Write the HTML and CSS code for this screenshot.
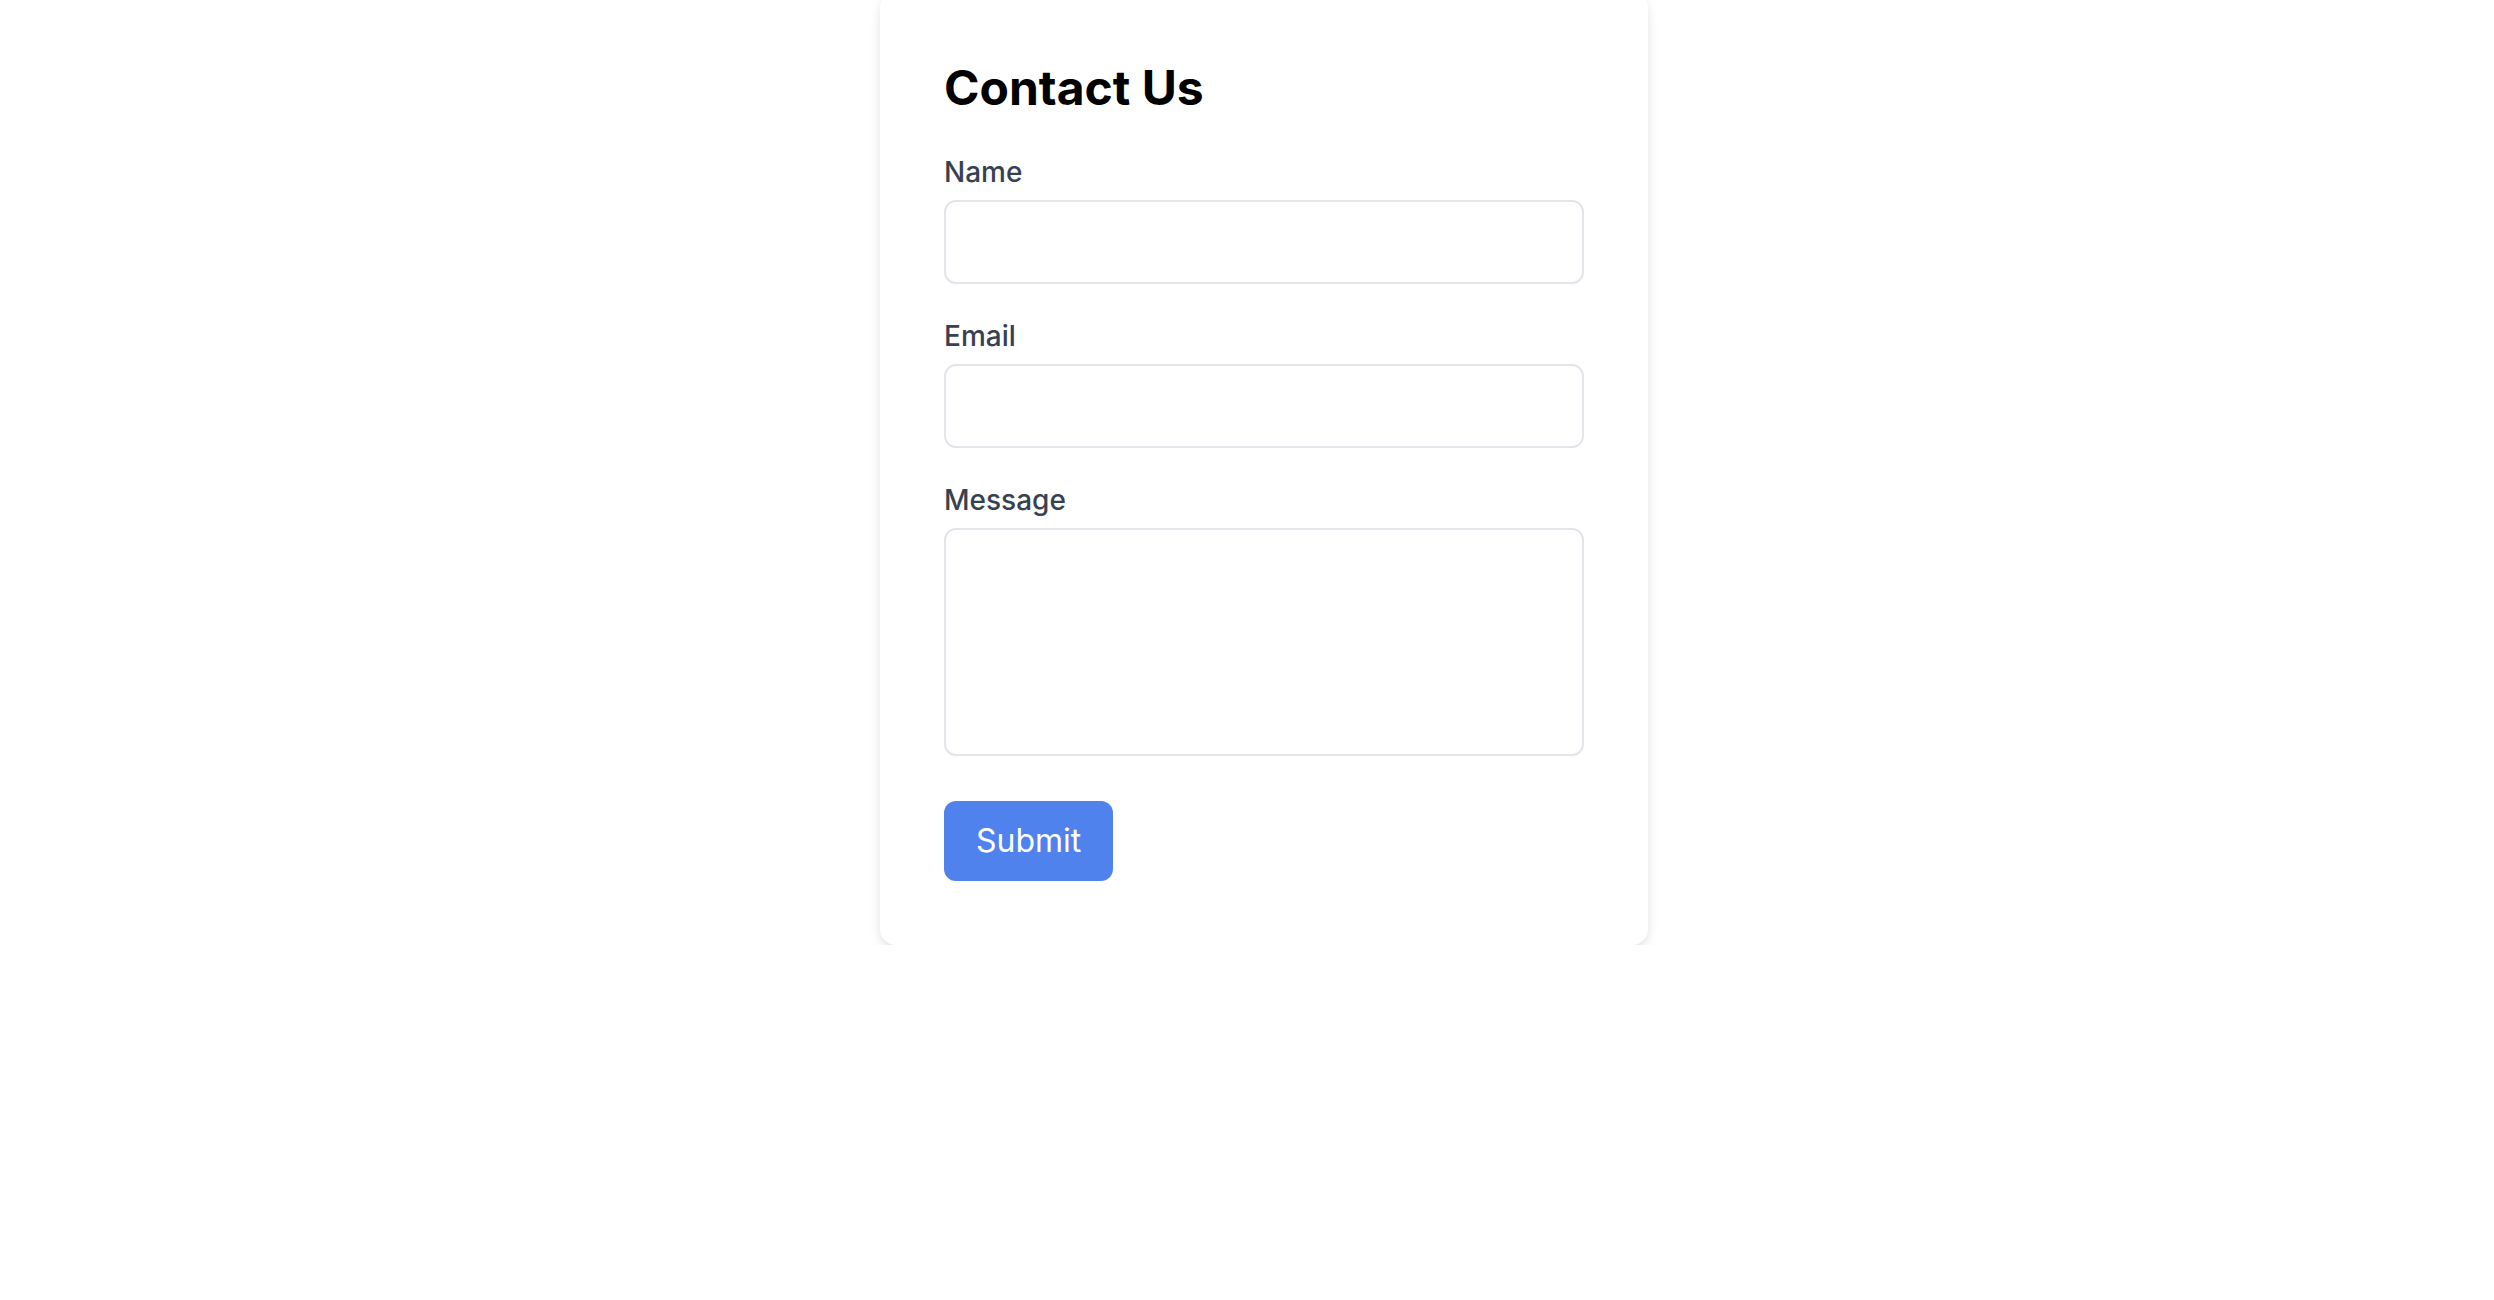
FILE: index.html
```html
<!DOCTYPE html>
<html lang="en">
<head>
<meta charset="utf-8">
<title>Contact Us</title>
<link rel="stylesheet" href="styles.css">
</head>
<body>
<div class="page">
  <form class="card">
    <h1 class="title">Contact Us</h1>
    <div class="field">
      <label class="label" for="name">Name</label>
      <input class="input" id="name" type="text">
    </div>
    <div class="field">
      <label class="label" for="email">Email</label>
      <input class="input" id="email" type="email">
    </div>
    <div class="field field-message">
      <label class="label" for="message">Message</label>
      <textarea class="input textarea" id="message"></textarea>
    </div>
    <button class="submit" type="button">Submit</button>
  </form>
</div>
</body>
</html>
```

FILE: styles.css
```css
html, body {
  margin: 0;
  padding: 0;
  background: #ffffff;
  font-family: Inter, "Noto Sans", "Liberation Sans", sans-serif;
}

.page {
  display: flex;
  justify-content: center;
  padding-left: 34px;
}

.card {
  box-sizing: border-box;
  width: 768px;
  margin-top: -8px;
  padding: 64px;
  background: #ffffff;
  border-radius: 16px;
  box-shadow: 0 8px 16px -4px rgba(0, 0, 0, 0.12), 0 2px 10px rgba(0, 0, 0, 0.05);
  display: flex;
  flex-direction: column;
  align-items: flex-start;
}

.title {
  margin: 0 0 32px 0;
  font-size: 48px;
  line-height: 64px;
  font-weight: 700;
  color: #000000;
}

.field {
  display: flex;
  flex-direction: column;
  width: 100%;
  margin-bottom: 32px;
}

.field-message {
  margin-bottom: 45px;
}

.label {
  font-size: 28px;
  line-height: 40px;
  font-weight: 500;
  color: #374151;
  margin-bottom: 8px;
}

.input {
  box-sizing: border-box;
  display: block;
  width: 100%;
  height: 84px;
  margin: 0;
  padding: 16px 24px;
  border: 2px solid #e4e5ea;
  border-radius: 12px;
  font-family: inherit;
  font-size: 32px;
  line-height: 48px;
  background: #ffffff;
  outline: none;
}

.textarea {
  height: 228px;
  resize: none;
}

.submit {
  box-sizing: border-box;
  height: 80px;
  padding: 16px 32px;
  border: none;
  border-radius: 12px;
  background: #5082ee;
  color: #ffffff;
  font-family: inherit;
  font-size: 32px;
  line-height: 48px;
  font-weight: 400;
  cursor: pointer;
}
```
